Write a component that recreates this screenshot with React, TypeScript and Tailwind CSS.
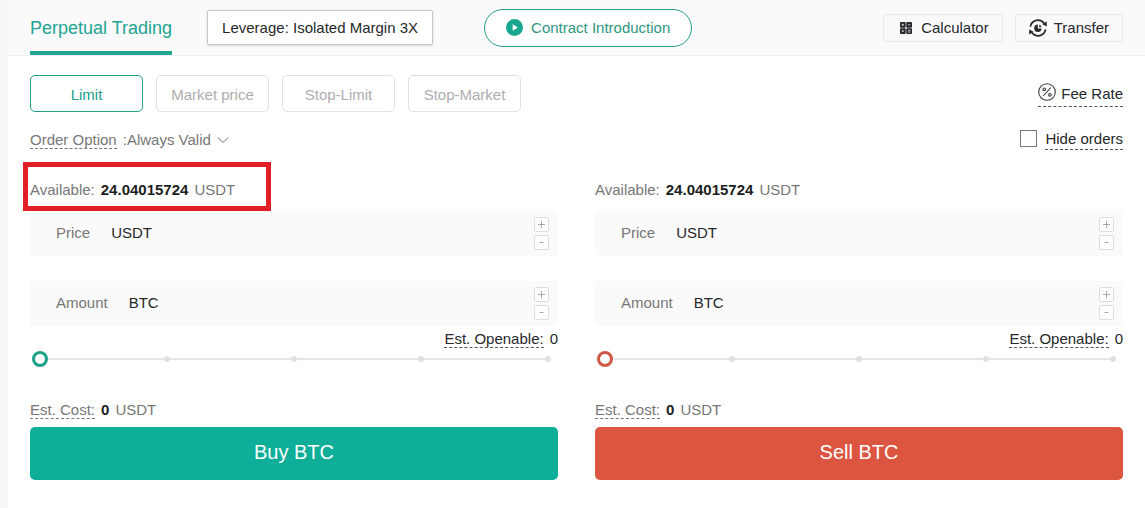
import React, { useState } from 'react';

type Side = 'buy' | 'sell';

const orderTypes = ['Limit', 'Market price', 'Stop-Limit', 'Stop-Market'];

const PlayIcon = () => (
  <svg width="17" height="17" viewBox="0 0 16 16" aria-hidden="true">
    <circle cx="8" cy="8" r="8" fill="#17a790" />
    <path d="M6.3 5v6l4.8-3z" fill="#fff" />
  </svg>
);

const CalculatorIcon = () => (
  <svg width="12" height="12" viewBox="0 0 12 12" aria-hidden="true">
    <g fill="#26282b">
      <rect width="5.7" height="5.7" rx="1" />
      <rect x="6.3" width="5.7" height="5.7" rx="1" />
      <rect y="6.3" width="5.7" height="5.7" rx="1" />
      <rect x="6.3" y="6.3" width="5.7" height="5.7" rx="1" />
    </g>
    <path
      d="M1.6 2.8h2.4M2.8 1.6v2.4M8 2.8h2.4M1.9 8.3l1.8 1.8M3.7 8.3l-1.8 1.8M8 8.4h2.4M8 10h2.4"
      stroke="#fff"
      strokeWidth="0.7"
    />
  </svg>
);

const TransferIcon = () => (
  <svg width="18" height="18" viewBox="0 0 18 18" fill="none" aria-hidden="true">
    <path d="M1.4 7.6A7.7 7.7 0 0 1 15.2 4.4M16.6 10.4A7.7 7.7 0 0 1 2.8 13.6" stroke="#26282b" strokeWidth="1.7" />
    <path d="M17.8 2.4v5.2l-4.4-2.4zM.2 15.6v-5.2l4.4 2.4z" fill="#26282b" />
    <path d="M8.8 5.6v4h3.8a3.7 3.7 0 1 1-3.8-4z" fill="#26282b" />
    <path d="M10.2 5.8a3 3 0 0 1 2.3 2.4h-2.3z" fill="#26282b" />
  </svg>
);

const PercentIcon = () => (
  <svg width="18" height="18" viewBox="0 0 18 18" fill="none" stroke="#3c3f42" strokeWidth="1.1" aria-hidden="true">
    <circle cx="9" cy="9" r="8.3" />
    <path d="M12.8 4.6l-7.6 8.4" />
    <circle cx="6.2" cy="6.3" r="1.3" />
    <circle cx="11.9" cy="11.8" r="1.3" />
  </svg>
);

const ChevronIcon = () => (
  <svg
    width="12"
    height="8"
    viewBox="0 0 12 8"
    fill="none"
    stroke="#777"
    aria-hidden="true"
    className="pointer-events-none absolute right-0 top-1/2 -translate-y-1/2"
  >
    <path d="M.8 1.5L6 6.5l5.2-5" />
  </svg>
);

const StepButton: React.FC<{ label: string; minus?: boolean }> = ({ label, minus }) => (
  <button
    type="button"
    aria-label={label}
    className="flex size-[15px] items-center justify-center rounded-xs border border-[#dcdee3] bg-white"
  >
    <svg width="7" height="7" viewBox="0 0 7 7" stroke="#a5a7ab" aria-hidden="true">
      <path d={minus ? 'M1.5 3.5h4' : 'M0 3.5h7M3.5 0v7'} />
    </svg>
  </button>
);

const Field: React.FC<{ id: string; label: string; unit: string }> = ({ id, label, unit }) => (
  <div className="flex h-[45px] items-center rounded bg-[#fafafa] pl-[26px] pr-[9px]">
    <label htmlFor={id} className="pb-[2px] text-[#777]">
      {label}
    </label>
    <input
      id={id}
      type="text"
      placeholder={unit}
      className="ml-[21px] min-w-0 flex-1 bg-transparent pb-[2px] outline-none placeholder:text-[#26282b]"
    />
    <div className="flex flex-col gap-[3px]">
      <StepButton label={`Increase ${label}`} />
      <StepButton label={`Decrease ${label}`} minus />
    </div>
  </div>
);

const OrderForm: React.FC<{ side: Side; highlighted?: boolean }> = ({ side, highlighted }) => {
  const [percent, setPercent] = useState(0);
  const isBuy = side === 'buy';

  return (
    <form className="min-w-0 flex-1" onSubmit={(e) => e.preventDefault()}>
      <div className="relative flex h-[43px] items-center text-[#777]">
        <p className="flex gap-[6px]">
          <span>Available:</span>
          <b className="text-[#1c1e21]">24.04015724</b>
          <span>USDT</span>
        </p>
        {highlighted && (
          <div className="pointer-events-none absolute -left-[7px] -top-[6px] h-[49px] w-[248px] border-[5px] border-[#e11f26]" />
        )}
      </div>

      <div className="flex flex-col gap-[25px]">
        <Field id={`${side}-price`} label="Price" unit="USDT" />
        <Field id={`${side}-amount`} label="Amount" unit="BTC" />
      </div>

      <div className="mt-1 flex h-[18px] justify-end gap-[6px]">
        <span className="border-b border-dashed border-[#555]">Est. Openable:</span>
        <span>0</span>
      </div>

      {/* Slider with quarter marks */}
      <div className="relative mt-[3px] flex h-4 items-center px-[2px]">
        <div className="absolute inset-x-[7px] flex items-center justify-between">
          <div className="absolute inset-x-0 h-[2px] bg-[#e5e6ea]" />
          {[0, 25, 50, 75, 100].map((mark) => (
            <span key={mark} className="relative size-[6px] rounded-full bg-[#dfe1e6]" />
          ))}
        </div>
        <input
          type="range"
          aria-label={`${side} amount percent`}
          value={percent}
          onChange={(e) => setPercent(Number(e.target.value))}
          className={
            'relative h-4 w-full appearance-none bg-transparent [&::-webkit-slider-thumb]:size-4 [&::-webkit-slider-thumb]:appearance-none [&::-webkit-slider-thumb]:rounded-full [&::-webkit-slider-thumb]:border-3 [&::-webkit-slider-thumb]:bg-white ' +
            (isBuy
              ? '[&::-webkit-slider-thumb]:border-[#1fa28c]'
              : '[&::-webkit-slider-thumb]:border-[#cf5846]')
          }
        />
      </div>

      <p className="mt-[34px] flex h-[18px] gap-[6px] text-[#777]">
        <span className="border-b border-dashed border-[#777]">Est. Cost:</span>
        <b className="text-[#1c1e21]">0</b>
        <span>USDT</span>
      </p>
      <button
        type="submit"
        className={`mt-2 h-[53px] w-full rounded-[5px] pb-1 text-xl text-white ${isBuy ? 'bg-[#0fae98]' : 'bg-[#db5541]'}`}
      >
        {isBuy ? 'Buy BTC' : 'Sell BTC'}
      </button>
    </form>
  );
};

export default function App() {
  const [orderType, setOrderType] = useState('Limit');

  return (
    <div className="min-h-screen bg-[#f7f8f9] pl-2 font-['Liberation_Sans',Arial,sans-serif] text-[15px] leading-[17px] text-[#26282b]">
      <div className="min-h-screen bg-white">
        <header className="flex h-14 items-center border-b border-[#eeeff2] bg-[#fafafb] px-[22px]">
          <a
            href="#perpetual"
            className="flex h-full items-center border-b-4 border-[#22a591] pt-1 text-lg text-[#22a591]"
          >
            Perpetual Trading
          </a>
          <button
            type="button"
            className="ml-[35px] h-[35px] rounded-xs border border-[#c3c5d3] bg-white px-[14px] shadow-sm"
          >
            Leverage: Isolated Margin 3X
          </button>
          <button
            type="button"
            className="ml-[51px] flex h-[38px] items-center gap-2 rounded-full border border-[#22a08a] bg-white px-[21px] text-[#2e9683]"
          >
            <PlayIcon />
            Contract Introduction
          </button>
          <div className="ml-auto flex gap-3">
            <button type="button" className="flex h-7 items-center gap-[9px] rounded-xs border border-[#e8e9ee] pl-4 pr-[13px]">
              <CalculatorIcon />
              Calculator
            </button>
            <button type="button" className="flex h-7 items-center gap-[7px] rounded-xs border border-[#e8e9ee] px-[13px]">
              <TransferIcon />
              Transfer
            </button>
          </div>
        </header>

        <main className="px-[22px] pt-[19px]">
          <div className="flex items-center justify-between">
            <div className="flex gap-[13px]">
              {orderTypes.map((type) => (
                <button
                  key={type}
                  type="button"
                  onClick={() => setOrderType(type)}
                  className={`h-[37px] w-[113px] rounded-[5px] border pt-[2px] ${
                    type === orderType ? 'border-[#22a08a] text-[#22a08a]' : 'border-[#e0e1e6] text-[#adadad]'
                  }`}
                >
                  {type}
                </button>
              ))}
            </div>
            <a href="#fee" className="flex h-[26px] gap-[5px] border-b border-dashed border-[#555] pt-[2px]">
              <PercentIcon />
              <span className="pt-[2px]">Fee Rate</span>
            </a>
          </div>

          <div className="mt-[18px] flex justify-between">
            <div className="flex h-[19px] pt-px text-[#777]">
              <label htmlFor="order-option" className="mr-[6px] border-b border-dashed border-[#777]">
                Order Option
              </label>
              <span>:</span>
              <div className="relative">
                <select id="order-option" className="appearance-none bg-transparent pr-[18px] outline-none">
                  <option>Always Valid</option>
                </select>
                <ChevronIcon />
              </div>
            </div>
            <div className="flex h-5 gap-2">
              <input
                id="hide-orders"
                type="checkbox"
                className="size-[17px] appearance-none border border-[#777] bg-white checked:bg-[#22a591]"
              />
              <label htmlFor="hide-orders" className="border-b border-dashed border-[#555]">
                Hide orders
              </label>
            </div>
          </div>

          <div className="mt-[18px] flex gap-[37px]">
            <OrderForm side="buy" highlighted />
            <OrderForm side="sell" />
          </div>
        </main>
      </div>
    </div>
  );
}
